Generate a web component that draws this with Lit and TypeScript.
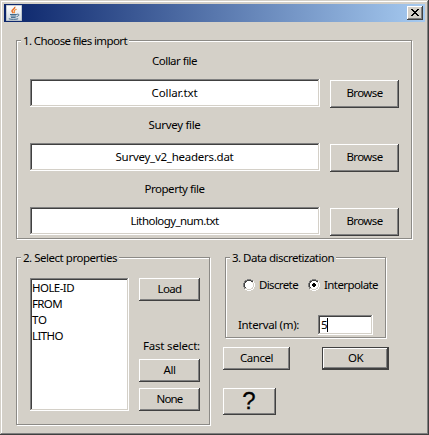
import { LitElement, html, css, svg } from "lit";
import { customElement, property } from "lit/decorators.js";

/* A line of text whose tracking is computed so that it takes `span` pixels. */
@customElement("fit-text")
class FitText extends LitElement {
  @property() text = "";
  @property({ type: Number }) span = 0;

  static styles = css`
    :host {
      display: block;
      flex: none;
      height: 14px;
      line-height: 14px;
      white-space: pre;
      font-family: "Noto Sans", "DejaVu Sans", sans-serif;
      font-size: 11.5px;
      color: #000;
    }
    .line {
      display: block;
      width: max-content;
    }
  `;

  render() {
    return html`<span class="line">${this.text}</span>`;
  }

  updated() {
    const line = this.renderRoot.querySelector(".line") as HTMLElement;
    line.style.letterSpacing = "0px";
    const natural = line.getBoundingClientRect().width;
    line.style.letterSpacing = (this.span - natural) / this.text.length + "px";
  }
}

const t = (text: string, span: number) =>
  html`<fit-text .text=${text} .span=${span}></fit-text>`;

const files: [string, number, string, number][] = [
  ["Collar file", 45, "Collar.txt", 46],
  ["Survey file", 52, "Survey_v2_headers.dat", 118],
  ["Property file", 60, "Lithology_num.txt", 88],
];

const properties: [string, number][] = [
  ["HOLE-ID", 42],
  ["FROM", 30],
  ["TO", 15],
  ["LITHO", 31],
];

@customElement("app-root")
class AppRoot extends LitElement {
  static styles = css`
    :host {
      display: block;
      width: 429px;
      height: 435px;
      background: #d4d0c8;
    }
    * {
      box-sizing: border-box;
    }
    .window {
      width: 429px;
      height: 435px;
      padding: 4px;
      box-shadow: inset -1px -1px #404040, inset 1px 1px #d4d0c8,
        inset -2px -2px #808080, inset 2px 2px #fff;
    }
    .titlebar {
      display: flex;
      justify-content: space-between;
      align-items: center;
      height: 18px;
      padding: 0 2px;
      background: linear-gradient(to right, #0a246a, #a6caf0);
    }
    .java,
    .close svg {
      display: block;
    }
    .close {
      width: 16px;
      height: 14px;
      padding: 0;
    }
    .button {
      display: flex;
      align-items: center;
      justify-content: center;
      padding-bottom: 2px;
      background: #d4d0c8;
      box-shadow: inset -1px -1px #404040, inset 1px 1px #fff,
        inset -2px -2px #808080;
    }
    .button.close {
      padding: 0;
    }
    .default {
      box-shadow: inset 0 0 0 1px #404040, inset -2px -2px #404040,
        inset 2px 2px #fff, inset -3px -3px #808080;
    }
    .field {
      display: flex;
      align-items: center;
      justify-content: center;
      padding-right: 1px;
      background: #fff;
      box-shadow: inset -1px -1px #fff, inset 1px 1px #808080,
        inset -2px -2px #d4d0c8, inset 2px 2px #404040;
    }
    .group {
      position: relative;
      border: 1px solid #8c8a86;
      box-shadow: 1px 1px #fff, inset 1px 1px #fff;
    }
    .legend {
      position: absolute;
      left: 4px;
      top: -7px;
      height: 14px;
      padding: 0 0 0 2px;
      background: #d4d0c8;
    }
    .content {
      padding: 18px 12px 0;
    }
    .files {
      width: 396px;
      height: 199px;
      padding: 2px 0 0 13px;
    }
    .file {
      display: grid;
      grid-template-columns: 290px 69px;
      grid-template-rows: 14px 28px;
      gap: 11px 10px;
      padding-top: 11px;
    }
    .caption {
      grid-column: 1 / 3;
      display: flex;
      justify-content: center;
      width: 289px;
    }
    .file .button {
      margin-top: 1px;
      height: 28px;
    }
    .bottom {
      display: flex;
      gap: 13px;
      margin-top: 18px;
    }
    .select {
      display: flex;
      gap: 10px;
      width: 194px;
      height: 168px;
      padding: 20px 0 0 13px;
    }
    .list {
      width: 99px;
      height: 133px;
      padding: 3px 0 0 2px;
      background: #fff;
      box-shadow: inset -1px -1px #fff, inset 1px 1px #808080,
        inset -2px -2px #d4d0c8, inset 2px 2px #404040;
    }
    .item {
      height: 16px;
    }
    .actions {
      display: flex;
      flex-direction: column;
      width: 61px;
    }
    .actions .button {
      height: 23px;
    }
    .fast {
      padding: 38px 0 6px 4px;
    }
    .none {
      margin-top: 6px;
    }
    .right {
      padding-left: 2px;
    }
    .discretization {
      width: 161px;
      height: 81px;
      padding: 20px 0 0 17px;
    }
    .row {
      display: flex;
      height: 14px;
    }
    .radio {
      display: block;
      width: 12px;
      height: 12px;
      margin: 1px 4px 0 0;
    }
    .second {
      margin: 1px 4px 0 10px;
    }
    .interval {
      display: flex;
      justify-content: space-between;
      width: 135px;
      margin: 23px 0 0 -5px;
    }
    .interval .label {
      padding-top: 3px;
    }
    .number {
      justify-content: flex-start;
      width: 55px;
      height: 20px;
      padding-left: 3px;
    }
    .caret {
      width: 1px;
      height: 14px;
      background: #000;
    }
    .commands {
      display: flex;
      gap: 32px;
      margin: 9px 0 0 -2px;
    }
    .commands .button {
      width: 67px;
      height: 23px;
    }
    .help {
      width: 53px;
      height: 27px;
      margin: 18px 0 0 -2px;
      padding: 0 1px 1px 0;
      font: 24px/24px "Liberation Sans", Arial, sans-serif;
      -webkit-text-stroke: 0.3px #000;
    }
  `;

  radio(on: boolean, cls: string) {
    return html`<svg class="radio ${cls}" viewBox="0 0 12 12" shape-rendering="crispEdges">
      ${svg`<path fill="#fff" d="M4 1h4v1h2v2h1v4h-1v2h-2v1h-4v-1h-2v-2h-1v-4h1v-2h2z"/>
      <path fill="#808080" d="M4 0h4v1h-4zM2 1h2v1h-2zM8 1h2v1h-2zM1 2h1v2h-1zM0 4h1v4h-1zM1 8h1v2h-1z"/>
      <path fill="#404040" d="M4 1h4v1h-4zM2 2h2v1h-2zM8 2h2v1h-2zM2 3h1v1h-1zM1 4h1v4h-1zM2 8h1v1h-1z"/>
      <path fill="#d4d0c8" d="M9 3h1v1h-1zM10 4h1v4h-1zM9 8h1v2h-1zM2 9h2v1h-2zM4 10h4v1h-4zM8 9h1v1h-1z"/>
      <path fill="#fff" d="M10 2h1v2h-1zM11 4h1v4h-1zM10 8h1v2h-1zM8 10h2v1h-2zM4 11h4v1h-4zM2 10h2v1h-2z"/>
      ${on ? svg`<path fill="#000" d="M5 4h2v1h1v2h-1v1h-2v-1h-1v-2h1z"/>` : null}`}
    </svg>`;
  }

  render() {
    return html`
      <div class="window">
        <div class="titlebar">
          <svg class="java" width="16" height="16" viewBox="0 0 16 16">
            <defs>
              <linearGradient id="tile" x1="0" y1="0" x2="0" y2="1">
                <stop offset="0" stop-color="#fff" />
                <stop offset="1" stop-color="#d3dbe2" />
              </linearGradient>
            </defs>
            <rect width="16" height="16" fill="#a3adb8" />
            <rect x=".6" y=".6" width="14.8" height="14.8" fill="url(#tile)" />
            <path d="M8.8 1.8C9.4 3.9 5.4 4.7 6 6.3c.2.7 1 1.2 1.3 1.9" fill="none" stroke="#e8702a" stroke-width="1.5" />
            <path d="M10.6 4.2C8.4 5 7.8 5.8 8.4 6.8c.3.6.1 1-.3 1.4" fill="none" stroke="#f08c32" stroke-width="1.2" />
            <path d="M4 9.5h6.8M4.6 11h5.6M5 12.4h4.6M2.8 13.8c2.4.7 7 .7 9.4 0" fill="none" stroke="#3f6a8c" stroke-width="1" />
            <path d="M10.8 9.3c2.8-.6 3 1.4-.2 2.4" fill="none" stroke="#3f6a8c" stroke-width="1" />
          </svg>
          <div class="button close">
            <svg width="16" height="14" viewBox="0 0 16 14" shape-rendering="crispEdges">
              <path d="M4 3h2v1h1v1h2v-1h1v-1h2v1h-1v1h-1v1h-1v1h1v1h1v1h1v1h-2v-1h-1v-1h-2v1h-1v1h-2v-1h1v-1h1v-1h1v-1h-1v-1h-1v-1h-1z" />
            </svg>
          </div>
        </div>
        <div class="content">
          <div class="group files">
            <div class="legend" style="width:108px">${t("1. Choose files import", 104)}</div>
            ${files.map(
              ([label, lw, value, vw]) => html`<div class="file">
                <div class="caption">${t(label, lw)}</div>
                <div class="field">${t(value, vw)}</div>
                <div class="button">${t("Browse", 36)}</div>
              </div>`
            )}
          </div>
          <div class="bottom">
            <div class="group select">
              <div class="legend" style="width:98px">${t("2. Select properties", 94)}</div>
              <div class="list">
                ${properties.map(([p, w]) => html`<div class="item">${t(p, w)}</div>`)}
              </div>
              <div class="actions">
                <div class="button">${t("Load", 24)}</div>
                <div class="fast">${t("Fast select:", 57)}</div>
                <div class="button">${t("All", 12)}</div>
                <div class="button none">${t("None", 26)}</div>
              </div>
            </div>
            <div class="right">
              <div class="group discretization">
                <div class="legend" style="width:106px">${t("3. Data discretization", 102)}</div>
                <div class="row">
                  ${this.radio(false, "")}${t("Discrete", 39)}
                  ${this.radio(true, "second")}${t("Interpolate", 54)}
                </div>
                <div class="interval">
                  <div class="label">${t("Interval (m):", 61)}</div>
                  <div class="field number">${t("5", 6)}<span class="caret"></span></div>
                </div>
              </div>
              <div class="commands">
                <div class="button">${t("Cancel", 33)}</div>
                <div class="button default">${t("OK", 15)}</div>
              </div>
              <div class="button help">?</div>
            </div>
          </div>
        </div>
      </div>
    `;
  }
}
